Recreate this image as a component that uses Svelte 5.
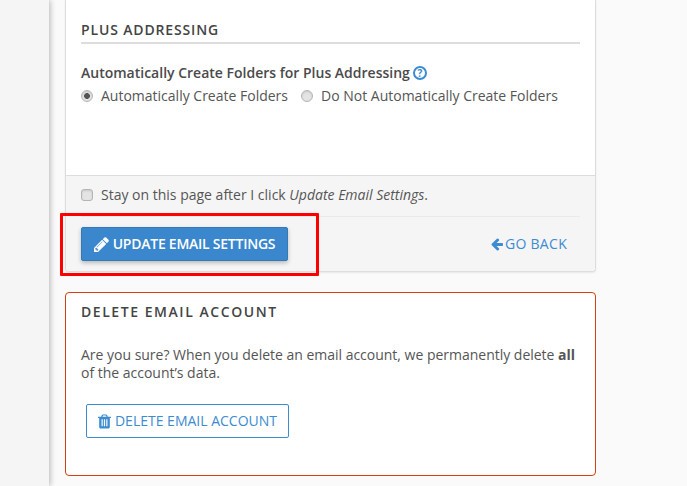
<script>
  const name = 'plus';
</script>

<div class="page">
  <aside class="rail"></aside>
  <main class="main">
    <section class="card">
      <div class="body">
        <h2 class="heading">Plus Addressing</h2>
        <div class="label">
          Automatically Create Folders for Plus Addressing
          <span class="help">?</span>
        </div>
        <div class="radios">
          <label class="opt"><input type="radio" {name} checked /> Automatically Create Folders</label>
          <label class="opt"><input type="radio" {name} /> Do Not Automatically Create Folders</label>
        </div>
      </div>
      <div class="footer">
        <label class="stay"><input type="checkbox" /> <span>Stay on this page after I click <em>Update Email Settings</em>.</span></label>
        <div class="actions">
          <button class="primary">
            <svg class="ic big" viewBox="128 128 1536 1536"><path fill="currentColor" d="M491 1536l91-91-235-235-91 91v107h128v128h107zm523-928q0-22-22-22-10 0-17 7l-542 542q-7 7-7 17 0 22 22 22 10 0 17-7l542-542q7-7 7-17zm-54-192l416 416-832 832h-416v-416zm683 96q0 53-37 90l-166 166-416-416 166-165q36-38 90-38 53 0 91 38l235 234q37 39 37 91z"/></svg>
            Update Email Settings
          </button>
          <a class="back" href="#back">
            <svg class="ic" viewBox="0 0 1792 1792"><path fill="currentColor" d="M1664 896v128q0 53-32.500 90.500t-84.500 37.500h-704l293 294q38 36 38 90t-38 90l-75 76q-37 37-90 37-52 0-91-37l-651-652q-37-37-37-90 0-52 37-91l651-650q38-38 91-38 52 0 90 38l75 74q38 38 38 91t-38 91l-293 293h704q52 0 84.500 37.500t32.500 90.500z"/></svg>
            Go Back
          </a>
        </div>
      </div>
    </section>

    <section class="danger">
      <h2 class="title">Delete Email Account</h2>
      <p>Are you sure? When you delete an email account, we permanently delete <strong>all</strong> of the account’s data.</p>
      <button class="outline">
        <svg class="ic trash" viewBox="192 128 1408 1536"><path fill="currentColor" d="M704 1376v-704q0-14-9-23t-23-9h-64q-14 0-23 9t-9 23v704q0 14 9 23t23 9h64q14 0 23-9t9-23zm256 0v-704q0-14-9-23t-23-9h-64q-14 0-23 9t-9 23v704q0 14 9 23t23 9h64q14 0 23-9t9-23zm256 0v-704q0-14-9-23t-23-9h-64q-14 0-23 9t-9 23v704q0 14 9 23t23 9h64q14 0 23-9t9-23zm-544-992h448l-48-117q-7-9-17-11h-317q-10 2-17 11zm928 32v64q0 14-9 23t-23 9h-96v948q0 83-47 143.500t-113 60.500h-832q-66 0-113-58.500t-47-141.500v-952h-96q-14 0-23-9t-9-23v-64q0-14 9-23t23-9h309l70-167q15-37 54-63t79-26h320q40 0 79 26t54 63l70 167h309q14 0 23 9t9 23z"/></svg>
        Delete Email Account
      </button>
    </section>
    <div class="mark"></div>
  </main>
</div>

<style>
  :global(body) {
    margin: 0;
    background: #fafafa;
  }
  .page {
    display: flex;
    width: 687px;
    height: 486px;
    overflow: hidden;
    font-family: "Open Sans", "Noto Sans", sans-serif;
    font-size: 14px;
    color: #555;
    line-height: 18px;
  }
  .rail {
    flex: 0 0 49px;
    background: #f5f5f5;
    box-shadow: 1px 0 6px rgba(0, 0, 0, 0.28);
    position: relative;
  }
  .main {
    position: relative;
    flex: 1;
    padding-left: 16px;
  }
  .card {
    width: 531px;
    box-sizing: border-box;
    height: 272px;
    background: #fff;
    border: 1px solid #ddd;
    border-top: 0;
    border-radius: 0 0 4px 4px;
    box-shadow: 0 1px 2px rgba(0, 0, 0, 0.08);
    display: flex;
    flex-direction: column;
  }
  .body {
    flex: 1;
    padding: 21px 15px 0;
  }
  .heading {
    margin: 0;
    height: 21px;
    border-bottom: 2px solid #ddd;
    font-size: 14px;
    font-weight: 600;
    line-height: 18px;
    letter-spacing: 0.85px;
    text-transform: uppercase;
    color: #444;
  }
  .label {
    margin-top: 20px;
    display: flex;
    align-items: center;
    gap: 3px;
    font-weight: 600;
    color: #4a4a4a;
  }
  .help {
    box-sizing: border-box;
    width: 14px;
    height: 14px;
    border: 2px solid #3d8bd0;
    border-radius: 50%;
    color: #3d8bd0;
    font-size: 10px;
    font-weight: 700;
    line-height: 10px;
    text-align: center;
  }
  .radios {
    display: flex;
    gap: 13px;
    margin-top: 5px;
  }
  .opt,
  .stay {
    display: flex;
    align-items: center;
    gap: 8px;
  }
  input {
    appearance: none;
    margin: 0;
    box-sizing: border-box;
    background: #e4e4e4;
    border: 1px solid #b5b5b5;
    box-shadow: inset 0 1px 2px rgba(0, 0, 0, 0.12);
    flex: none;
  }
  input[type="radio"] {
    width: 12px;
    height: 12px;
    border-radius: 50%;
  }
  input[type="radio"]:checked {
    background: radial-gradient(circle, #555 0 2.6px, #e4e4e4 3.2px);
  }
  input[type="checkbox"] {
    width: 12px;
    height: 12px;
    border-radius: 3px;
  }
  .footer {
    flex: 0 0 96px;
    box-sizing: border-box;
    background: #f5f5f5;
    border-top: 1px solid #ddd;
    border-radius: 0 0 4px 4px;
    padding: 0 15px;
  }
  .stay {
    height: 38px;
    padding-bottom: 2px;
    border-bottom: 1px solid #eaeaea;
  }
  .actions {
    display: flex;
    justify-content: space-between;
    align-items: center;
    margin-top: 10px;
    padding-right: 13px;
  }
  .ic {
    width: 14px;
    height: 14px;
    flex: none;
  }
  .big {
    width: 15px;
    height: 15px;
  }
  .trash {
    width: 13px;
    height: 15px;
  }
  button {
    font: inherit;
    text-transform: uppercase;
    display: flex;
    align-items: center;
    gap: 4px;
    box-sizing: border-box;
    height: 34px;
    border-radius: 2px;
    cursor: pointer;
  }
  .primary {
    width: 207px;
    justify-content: center;
    padding: 0;
    background: #3a87cd;
    color: #fff;
    font-weight: 600;
    letter-spacing: -0.25px;
    border: 1px solid #337ab7;
    box-shadow: 0 2px 4px rgba(0, 0, 0, 0.25);
  }
  .back {
    display: flex;
    align-items: center;
    gap: 1px;
    color: #3d8bd0;
    text-decoration: none;
    text-transform: uppercase;
    letter-spacing: 0.3px;
  }
  .danger {
    margin-top: 20px;
    width: 531px;
    height: 184px;
    box-sizing: border-box;
    background: #fff;
    border: 1px solid #d2410f;
    border-radius: 4px;
    padding: 10px 15px 0;
  }
  .title {
    margin: 0;
    font-size: 14px;
    font-weight: 600;
    line-height: 18px;
    letter-spacing: 1.55px;
    text-transform: uppercase;
    color: #444;
  }
  p {
    margin: 25px 0 0;
    letter-spacing: -0.012px;
  }
  strong {
    font-weight: 700;
  }
  .outline {
    margin: 22px 0 0 5px;
    width: 203px;
    justify-content: center;
    padding: 0;
    background: #fff;
    color: #3d8bd0;
    border: 1px solid #3d8bd0;
  }
  .mark {
    position: absolute;
    left: 11px;
    top: 213px;
    width: 259px;
    height: 63px;
    box-sizing: border-box;
    border: 3px solid #f00;
    border-radius: 1px;
    pointer-events: none;
  }
</style>
